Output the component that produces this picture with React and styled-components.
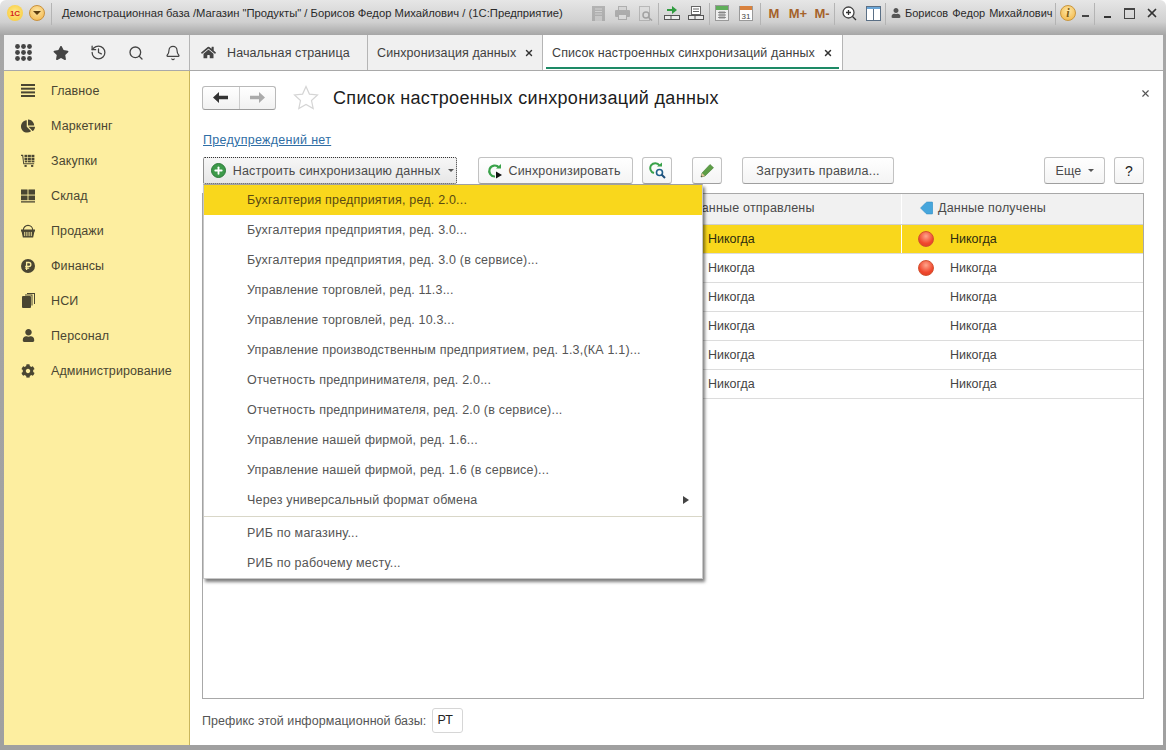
import React from 'react';
import styled, { createGlobalStyle } from 'styled-components';
import { FaHome, FaStar, FaChartPie, FaCog, FaUser } from 'react-icons/fa';
import { History, Search, Bell, X, Plus } from 'lucide-react';

const GlobalStyle = createGlobalStyle`
  html, body { margin: 0; padding: 0; background: #fff; }
  body { font-family: "Liberation Sans", Arial, sans-serif; }
  * { box-sizing: border-box; }
`;

const Window = styled.div`
  width: 1166px;
  height: 750px;
  padding: 0 3px 5px 4px;
  display: flex;
  flex-direction: column;
  background: linear-gradient(#e6e6e6 0, #d0d0d0 22px, #a6a6a6 35px, #a0a0a0 100%);
  border-radius: 6px 6px 0 0;
  overflow: hidden;
`;

const TitleBar = styled.div`
  height: 35px;
  display: flex;
  align-items: flex-start;
  padding: 3px 0 0 3px;
  margin-right: -3px;
  flex-shrink: 0;
`;

const LogoBall = styled.div`
  width: 16px;
  height: 16px;
  margin-top: 2px;
  border-radius: 50%;
  background: radial-gradient(circle at 50% 45%, #ffec8f, #f8c42c);
  color: #d5261c;
  font: bold 8px "Liberation Sans", sans-serif;
  display: flex;
  align-items: center;
  justify-content: center;
  margin-right: 6px;
`;

const MenuBall = styled(LogoBall)`
  background: radial-gradient(circle at 50% 35%, #fde7a6, #f2b245);
  border: 1px solid #c9903a;
  &::after {
    content: '';
    border: 4px solid transparent;
    border-top: 4px solid #5c3d10;
    border-bottom: 0;
  }
`;

const TitleText = styled.div`
  margin-left: 10px;
  font-size: 11.24px;
  line-height: 20px;
  color: #2a2a2a;
  white-space: nowrap;
  width: 524px;
  flex-shrink: 0;
`;

const Sep = styled.div`
  width: 1px;
  height: 22px;
  margin: 0 ${p => p.$r || 0}px 0 ${p => p.$l || 0}px;
  background: #b4b4b4;
  flex-shrink: 0;
`;

const ToolSlot = styled.div`
  width: ${p => p.$w || 24}px;
  height: 20px;
  flex-shrink: 0;
  display: flex;
  align-items: center;
  justify-content: center;
  color: ${p => p.$color || '#a5622a'};
  font-size: 13px;
  font-weight: bold;
  opacity: ${p => (p.$dim ? 0.55 : 1)};
`;

const UserName = styled.div`
  font-size: 11px;
  line-height: 20px;
  word-spacing: 1px;
  color: #2a2a2a;
  white-space: nowrap;
  margin-left: 2px;
  width: 148px;
  flex-shrink: 0;
`;

const InfoBall = styled.div`
  width: 16px;
  height: 16px;
  border-radius: 50%;
  background: radial-gradient(circle at 50% 35%, #fde7a6, #f1b23f);
  border: 1px solid #c9963c;
  color: #7a5a14;
  font: italic bold 12px "Liberation Serif", serif;
  text-align: center;
  line-height: 14px;
`;

const DownMark = styled.div`
  width: 7px;
  height: 2px;
  background: #444;
  margin: 12px 5px 0 2px;
  flex-shrink: 0;
`;

const MinBar = styled.div`
  width: 7px;
  height: 2px;
  background: #333;
  margin-top: 8px;
`;

const MaxBox = styled.div`
  width: 11px;
  height: 11px;
  border: 1px solid #444;
  border-top-width: 2px;
`;

const TabBar = styled.div`
  height: 36px;
  display: flex;
  background: #f0f0f0;
  border-bottom: 1px solid #a9a9a9;
  flex-shrink: 0;
`;

const QuickIcons = styled.div`
  width: 186px;
  display: flex;
  align-items: center;
  gap: 21px;
  padding-left: 11px;
  color: #444;
  border-right: 1px solid #b5b5b5;
  flex-shrink: 0;
`;

const Tab = styled.div`
  height: 100%;
  width: ${p => p.$w}px;
  flex-shrink: 0;
  display: flex;
  align-items: center;
  padding-left: 9px;
  font-size: 12.5px;
  letter-spacing: 0.1px;
  color: #3f3f3f;
  background: ${p => (p.$active ? '#fff' : 'transparent')};
  border-right: 1px solid #b5b5b5;
  position: relative;
  white-space: nowrap;
  ${p => p.$active && `
    &::after {
      content: '';
      position: absolute;
      left: 3px;
      right: 3px;
      bottom: 1px;
      height: 2px;
      background: #1d8a66;
    }
  `}
`;

const HomeMark = styled.span`
  display: flex;
  margin: 0 11px 0 2px;
  color: #444;
`;

const TabClose = styled.span`
  margin-left: 8px;
  display: flex;
  color: #333;
`;

const Body = styled.div`
  flex: 1;
  min-height: 0;
  display: flex;
  background: #fff;
`;

const Sidebar = styled.nav`
  width: 186px;
  flex-shrink: 0;
  background: #fdeea0;
  border-right: 1px solid #c9b65c;
  padding-top: 2px;
`;

const NavItem = styled.div`
  height: 35px;
  display: flex;
  align-items: center;
  padding-left: 17px;
  gap: 16px;
  font-size: 12.5px;
  letter-spacing: 0.1px;
  color: #4a4632;
`;

const NavIcon = styled.span`
  width: 14px;
  height: 16px;
  display: flex;
  align-items: center;
  justify-content: center;
  color: #4a4632;
  flex-shrink: 0;
`;

const Content = styled.main`
  flex: 1;
  min-width: 0;
  padding: 14px 19px 12px 12px;
  display: flex;
  flex-direction: column;
  position: relative;
`;

const FormHead = styled.div`
  display: flex;
  align-items: center;
  height: 25px;
`;

const NavButtons = styled.div`
  width: 74px;
  height: 24px;
  display: flex;
  border: 1px solid #b9b9b9;
  border-bottom-color: #9c9c9c;
  border-radius: 3px;
  background: linear-gradient(#fff, #f1f1f1);
`;

const NavArrow = styled.div`
  flex: 1;
  display: flex;
  align-items: center;
  justify-content: center;
  color: ${p => (p.$off ? '#aaa' : '#333')};
  & + & { border-left: 1px solid #ccc; }
`;

const FavStar = styled.span`
  margin-left: 17px;
  display: flex;
`;

const Title = styled.h1`
  margin: 2px 0 0 14px;
  font-size: 18px;
  letter-spacing: 0.33px;
  font-weight: normal;
  color: #1c1c1c;
  white-space: nowrap;
`;

const FormClose = styled.span`
  position: absolute;
  top: 17px;
  right: 12px;
  display: flex;
  color: #555;
`;

const WarnLink = styled.a`
  display: block;
  margin: 22px 0 0 1px;
  font-size: 12.5px;
  letter-spacing: 0.3px;
  color: #2f6ea5;
  text-decoration: underline;
  line-height: 16px;
`;

const CommandArea = styled.div`
  position: relative;
  margin-top: 9px;
  display: flex;
  align-items: center;
  height: 27px;
`;

const Button = styled.div`
  height: 27px;
  width: ${p => p.$w}px;
  margin-left: ${p => p.$ml || 0}px;
  padding: 0 ${p => p.$pr || 0}px 0 ${p => p.$pl || 0}px;
  flex-shrink: 0;
  display: flex;
  align-items: center;
  justify-content: center;
  gap: 5px;
  border: 1px solid #c2c2c2;
  border-bottom-color: #9f9f9f;
  border-radius: 3px;
  background: linear-gradient(#fff, #f4f4f4);
  font-size: ${p => p.$size || 12.5}px;
  letter-spacing: 0.2px;
  color: ${p => p.$color || '#4a4a4a'};
  white-space: nowrap;
`;

const DefaultButton = styled(Button)`
  border: 1px dotted #333;
  background: linear-gradient(#f6f6f6, #e7e7e7);
  border-radius: 2px;
  margin-left: 1px;
  gap: 7px;
`;

const Caret = styled.span`
  border: 3px solid transparent;
  border-top: 3px solid #555;
  border-bottom: 0;
  margin-left: 1px;
`;

const AddBall = styled.span`
  display: flex;
  width: 15px;
  height: 15px;
  border-radius: 50%;
  background: #3d9a4a;
  border: 1px solid #2b7a38;
  align-items: center;
  justify-content: center;
  color: #fff;
`;

const Grid = styled.div`
  flex: 1;
  min-height: 0;
  margin-top: 9px;
  border: 1px solid #a8a8a8;
`;

const HeaderRow = styled.div`
  height: 31px;
  display: grid;
  grid-template-columns: 480px 218px 1fr;
  background: #f1f1f1;
  border-bottom: 1px solid #d0d0d0;
`;

const HeaderCell = styled.div`
  display: flex;
  align-items: center;
  gap: 5px;
  padding: 0 0 2px ${p => p.$pad || 0}px;
  font-size: 12.5px;
  letter-spacing: 0.2px;
  color: #4a4a4a;
  & + & { border-left: 1px solid #fff; }
`;

const Row = styled.div`
  height: 29px;
  display: grid;
  grid-template-columns: 480px 218px 1fr;
  background: ${p => (p.$sel ? '#f9d71c' : '#fff')};
  border-bottom: 1px solid #dcdcdc;
  font-size: 12.5px;
  color: ${p => (p.$sel ? '#2c2c10' : '#444')};
`;

const Cell = styled.div`
  display: flex;
  align-items: center;
  padding-left: ${p => p.$pad || 0}px;
  border-left: 1px solid ${p => (p.$line ? '#fff' : 'transparent')};
`;

const Lamp = styled.span`
  width: 16px;
  height: 16px;
  border-radius: 50%;
  margin: 0 16px;
  flex-shrink: 0;
  background: radial-gradient(circle at 50% 30%, #ffa58c, #f0482e 60%, #dc3c20);
  border: 1px solid #d2512f;
`;

const LampGap = styled.span`
  width: 48px;
  flex-shrink: 0;
`;

const DropMenu = styled.div`
  position: absolute;
  top: 27px;
  left: 1px;
  width: 500px;
  height: 395px;
  background: #fff;
  border: 1px solid #c8c8c8;
  border-top-color: #a0a0a0;
  box-shadow: 2px 3px 3px rgba(0, 0, 0, 0.5);
  z-index: 5;
`;

const MenuItem = styled.div`
  height: 30px;
  display: flex;
  align-items: center;
  justify-content: space-between;
  padding: 0 13px 0 43px;
  font-size: 12.5px;
  letter-spacing: 0.2px;
  color: ${p => (p.$hot ? '#5a4a10' : '#555')};
  background: ${p => (p.$hot ? '#f9d71c' : 'transparent')};
`;

const SubArrow = styled.span`
  border: 4px solid transparent;
  border-left: 6px solid #444;
  border-right: 0;
`;

const MenuLine = styled.div`
  height: 1px;
  background: #d9d7c8;
  margin: 1px 0;
`;

const Footer = styled.div`
  margin-top: 9px;
  display: flex;
  align-items: center;
  gap: 6px;
  font-size: 12.5px;
  letter-spacing: 0.06px;
  color: #555;
`;

const PrefixBox = styled.div`
  width: 31px;
  height: 25px;
  border: 1px solid #d6d6d6;
  border-radius: 3px;
  padding-left: 4px;
  line-height: 23px;
  color: #222;
`;

const DotGrid = () => (
  <svg width="17" height="17" viewBox="0 0 17 17" fill="#444">
    {[2.5, 8.5, 14.5].flatMap(y => [2.5, 8.5, 14.5].map(x => <circle key={`${x}-${y}`} cx={x} cy={y} r="2.4" />))}
  </svg>
);

const BarsIcon = () => (
  <svg width="14" height="13" viewBox="0 0 14 13" fill="currentColor">
    <rect y="0" width="14" height="2" /><rect y="3.7" width="14" height="2" /><rect y="7.4" width="14" height="2" /><rect y="11" width="14" height="2" />
  </svg>
);

const CartIcon = () => (
  <svg width="16" height="15" viewBox="0 0 16 15" fill="currentColor">
    <path d="M0 1h2.5l1 9.5H15v1.3H2.6L1.4 2.3H0z" />
    <rect x="4" y="1" width="3.3" height="2.7" /><rect x="8" y="1" width="3.3" height="2.7" /><rect x="12" y="1" width="3.3" height="2.7" />
    <rect x="4" y="4.4" width="3.3" height="2.7" /><rect x="8" y="4.4" width="3.3" height="2.7" /><rect x="12" y="4.4" width="3.3" height="2.7" />
    <rect x="4.3" y="7.6" width="3" height="2" /><rect x="8" y="7.6" width="3.3" height="2" /><rect x="12" y="7.6" width="3.3" height="2" />
    <rect x="4" y="12.6" width="2.5" height="2.2" /><rect x="11.5" y="12.6" width="2.5" height="2.2" />
  </svg>
);

const StockIcon = () => (
  <svg width="15" height="14" viewBox="0 0 15 14" fill="currentColor">
    <rect width="7" height="5.5" /><rect x="8" width="7" height="5.5" /><rect y="6.5" width="7" height="5" /><rect x="8" y="6.5" width="7" height="5" /><rect y="12.6" width="15" height="1.4" />
  </svg>
);

const BasketIcon = () => (
  <svg width="15" height="14" viewBox="0 0 15 14">
    <path d="M2.5 6a5 5 0 0 1 10 0" fill="none" stroke="currentColor" strokeWidth="1.2" />
    <path d="M0 5.500h15v2h-.6L13 14H2L.6 7.500H0z" fill="currentColor" />
    <path d="M4 8v4.500M6.300 8v4.500M8.700 8v4.500M11 8v4.500" stroke="#fdeea0" strokeWidth="1" />
  </svg>
);

const RubleIcon = () => (
  <svg width="14" height="14" viewBox="0 0 14 14">
    <circle cx="7" cy="7" r="7" fill="currentColor" />
    <path d="M5.600 11V3.500h2.300a1.900 1.900 0 0 1 0 3.900H4.200M4.200 9.200h4" fill="none" stroke="#fdeea0" strokeWidth="1.3" />
  </svg>
);

const PagesIcon = () => (
  <svg width="13" height="15" viewBox="0 0 13 15" fill="currentColor">
    <rect x="0" y="3" width="9" height="12" rx="1" />
    <path d="M3 1.500h7.500v11h-1v-10H3zM5 0h8v11h-1V1H5z" />
  </svg>
);

const AddIcon = () => (
  <AddBall><Plus size={11} strokeWidth={4} /></AddBall>
);

const BackArrow = () => (
  <svg width="15" height="11" viewBox="0 0 15 11" fill="currentColor"><path d="M0 5.500L6 0v3.800h9v3.400H6V11z" /></svg>
);

const NextArrow = () => (
  <svg width="15" height="11" viewBox="0 0 15 11" fill="currentColor"><path d="M15 5.500L9 0v3.800H0v3.400h9V11z" /></svg>
);

const SyncIcon = () => (
  <svg width="16" height="16" viewBox="0 0 16 16">
    <path d="M12 4.500A5.500 5.500 0 1 0 8 13.500" fill="none" stroke="#3aa24a" strokeWidth="2.2" />
    <path d="M9 5.500h5v-4.500z" fill="#3aa24a" />
    <path d="M9 8.500l6 3.500-6 3.500z" fill="#111" />
  </svg>
);

const SyncFindIcon = () => (
  <svg width="17" height="17" viewBox="0 0 17 17">
    <path d="M10.500 3.500A5 5 0 1 0 5 11" fill="none" stroke="#3aa24a" strokeWidth="2" />
    <path d="M8 4.500h5v-4z" fill="#3aa24a" />
    <circle cx="10.500" cy="10.500" r="3" fill="#fff" stroke="#1f5f8a" strokeWidth="1.600" />
    <path d="M12.500 12.500L16 16" stroke="#1f4f7a" strokeWidth="2" />
  </svg>
);

const PencilIcon = () => (
  <svg width="15" height="15" viewBox="0 0 15 15">
    <path d="M1 14l1-4 8-8.500 3.500 3.200L5 13z" fill="#5d9e45" stroke="#3f7a30" strokeWidth="0.6" />
    <path d="M1 14l1-4 3 3z" fill="#e0c39a" />
    <path d="M1 14l.4-1.600 1.200 1.100z" fill="#333" />
  </svg>
);

const BlueArrow = () => (
  <svg width="13" height="14" viewBox="0 0 13 14">
    <path d="M0.500 7L6 1.500Q6.500 1 7.500 1H12q.8 0 .8.8v10.400q0 .8-.8.8H7.500q-1 0-1.500-.5z" fill="#47a6dc" stroke="#2a86bd" strokeWidth="0.5" />
  </svg>
);

const OutlineStar = () => (
  <svg width="26" height="25" viewBox="0 0 26 25">
    <path d="M13 1.500l3.400 7.600 8.100.9-6 5.500 1.700 8.100-7.200-4.200-7.200 4.200 1.700-8.100-6-5.500 8.100-.9z" fill="#fff" stroke="#d5d5d5" strokeWidth="1.200" />
  </svg>
);

const DocIcon = ({ color = '#666' }) => (
  <svg width="16" height="16" viewBox="0 0 16 16">
    <rect x="3.500" y="1.500" width="9" height="8" fill="#fff" stroke={color} />
    <path d="M5 4h6M5 6.500h6" stroke={color} />
    <rect x="0.500" y="10.500" width="15" height="4" fill="#ececec" stroke="#555" />
    <path d="M7 10.500v4" stroke="#555" />
  </svg>
);

const UploadIcon = () => (
  <svg width="16" height="16" viewBox="0 0 16 16">
    <path d="M3 4h5V1l5 4-5 4V6H3z" fill="#2f9c3f" />
    <rect x="0.500" y="10.500" width="15" height="4" fill="#ececec" stroke="#555" />
    <path d="M7 10.500v4" stroke="#555" />
  </svg>
);

const FloppyIcon = () => (
  <svg width="13" height="15" viewBox="0 0 13 15"><rect width="13" height="15" fill="#8f8f8f" /><path d="M3 3h7M3 5.500h7M3 8h7" stroke="#c9c9c9" /><rect x="3" y="10" width="7" height="5" fill="#bdbdbd" /></svg>
);

const PrintIcon = () => (
  <svg width="15" height="14" viewBox="0 0 15 14"><rect x="3.500" y="0.500" width="8" height="4" fill="#cfcfcf" stroke="#888" /><rect y="4" width="15" height="7" rx="1" fill="#888" /><rect x="3.500" y="8.500" width="8" height="5" fill="#ddd" stroke="#888" /></svg>
);

const PreviewIcon = () => (
  <svg width="14" height="15" viewBox="0 0 14 15"><rect x="0.500" y="0.500" width="10" height="14" fill="#ddd" stroke="#999" /><circle cx="7" cy="9" r="3" fill="none" stroke="#777" strokeWidth="1.500" /><path d="M9 11l4 3.500" stroke="#777" strokeWidth="1.500" /></svg>
);

const CalcIcon = () => (
  <svg width="14" height="16" viewBox="0 0 14 16"><rect x="0.500" y="0.500" width="13" height="15" fill="#eee" stroke="#999" /><rect x="1" y="1" width="12" height="4" fill="#5fae5a" /><path d="M3 7.500h8M3 10h8M3 12.500h8M5 6v8M7 6v8M9 6v8" stroke="#777" strokeWidth="0.8" /></svg>
);

const CalendarIcon = () => (
  <svg width="14" height="16" viewBox="0 0 14 16"><rect x="0.500" y="1.500" width="13" height="14" fill="#fff" stroke="#999" /><rect x="1" y="1" width="12" height="4" fill="#d8813d" /><text x="7" y="13.500" textAnchor="middle" fontSize="8" fontFamily="Liberation Sans" fontWeight="normal" fill="#444">31</text></svg>
);

const ZoomIcon = () => (
  <svg width="15" height="15" viewBox="0 0 15 15"><circle cx="6.500" cy="6.500" r="5.500" fill="#fff" stroke="#444" strokeWidth="1.300" /><path d="M10.500 10.500L14 14M4 6.500h5M6.500 4v5" stroke="#333" strokeWidth="1.300" /></svg>
);

const PanelIcon = () => (
  <svg width="15" height="15" viewBox="0 0 15 15"><rect x="0.500" y="0.500" width="14" height="14" fill="#fff" stroke="#5a6f85" /><rect x="1" y="1" width="13" height="2" fill="#6aa6d8" /><path d="M7.500 3v11" stroke="#5a6f85" /></svg>
);

const sections = [
  ['Главное', <BarsIcon />],
  ['Маркетинг', <FaChartPie size={14} />],
  ['Закупки', <CartIcon />],
  ['Склад', <StockIcon />],
  ['Продажи', <BasketIcon />],
  ['Финансы', <RubleIcon />],
  ['НСИ', <PagesIcon />],
  ['Персонал', <FaUser size={13} />],
  ['Администрирование', <FaCog size={14} />],
];

const menuItems = [
  'Бухгалтерия предприятия, ред. 2.0...',
  'Бухгалтерия предприятия, ред. 3.0...',
  'Бухгалтерия предприятия, ред. 3.0 (в сервисе)...',
  'Управление торговлей, ред. 11.3...',
  'Управление торговлей, ред. 10.3...',
  'Управление производственным предприятием, ред. 1.3,(КА 1.1)...',
  'Отчетность предпринимателя, ред. 2.0...',
  'Отчетность предпринимателя, ред. 2.0 (в сервисе)...',
  'Управление нашей фирмой, ред. 1.6...',
  'Управление нашей фирмой, ред. 1.6 (в сервисе)...',
];

const rows = [
  { lamp: true, sel: true },
  { lamp: true },
  {},
  {},
  {},
  {},
];

export default function App() {
  return (
    <>
      <GlobalStyle />
      <Window>
        <TitleBar>
          <LogoBall>1С</LogoBall>
          <MenuBall />
          <Sep />
          <TitleText>Демонстрационная база /Магазин "Продукты" / Борисов Федор Михайлович /  (1С:Предприятие)</TitleText>
          <ToolSlot $dim><FloppyIcon /></ToolSlot>
          <ToolSlot $dim><PrintIcon /></ToolSlot>
          <ToolSlot $dim><PreviewIcon /></ToolSlot>
          <Sep $r={1} />
          <ToolSlot><UploadIcon /></ToolSlot>
          <ToolSlot><DocIcon /></ToolSlot>
          <Sep $l={1} />
          <ToolSlot><CalcIcon /></ToolSlot>
          <ToolSlot><CalendarIcon /></ToolSlot>
          <Sep $l={2} $r={1} />
          <ToolSlot>M</ToolSlot>
          <ToolSlot>M+</ToolSlot>
          <ToolSlot>M-</ToolSlot>
          <Sep $r={2} />
          <ToolSlot><ZoomIcon /></ToolSlot>
          <ToolSlot><PanelIcon /></ToolSlot>
          <Sep $r={3} />
          <ToolSlot $w={14} $color="#555"><FaUser size={10} /></ToolSlot>
          <UserName>Борисов Федор Михайлович</UserName>
          <Sep $l={2} />
          <ToolSlot><InfoBall>i</InfoBall></ToolSlot>
          <DownMark />
          <Sep />
          <ToolSlot><MinBar /></ToolSlot>
          <ToolSlot $w={20}><MaxBox /></ToolSlot>
          <ToolSlot $w={25} $color="#333"><X size={14} strokeWidth={3} /></ToolSlot>
        </TitleBar>
        <TabBar>
          <QuickIcons>
            <DotGrid />
            <FaStar size={16} />
            <History size={17} strokeWidth={1.8} />
            <Search size={16} strokeWidth={2} />
            <Bell size={16} strokeWidth={1.8} />
          </QuickIcons>
          <Tab $w={178}><HomeMark><FaHome size={15} /></HomeMark>Начальная страница</Tab>
          <Tab $w={175}>Синхронизация данных<TabClose><X size={10} strokeWidth={3.5} /></TabClose></Tab>
          <Tab $w={300} $active>Список настроенных синхронизаций данных<TabClose><X size={10} strokeWidth={3.5} /></TabClose></Tab>
        </TabBar>
        <Body>
          <Sidebar>
            {sections.map(([label, icon]) => (
              <NavItem key={label}><NavIcon>{icon}</NavIcon>{label}</NavItem>
            ))}
          </Sidebar>
          <Content>
            <FormHead>
              <NavButtons>
                <NavArrow><BackArrow /></NavArrow>
                <NavArrow $off><NextArrow /></NavArrow>
              </NavButtons>
              <FavStar><OutlineStar /></FavStar>
              <Title>Список настроенных синхронизаций данных</Title>
              <FormClose><X size={11} strokeWidth={2.5} /></FormClose>
            </FormHead>
            <WarnLink>Предупреждений нет</WarnLink>
            <CommandArea>
              <DefaultButton $w={254} $pl={5}><AddIcon />Настроить синхронизацию данных<Caret /></DefaultButton>
              <Button $w={155} $ml={21} $pr={3}><SyncIcon />Синхронизировать</Button>
              <Button $w={30} $ml={9}><SyncFindIcon /></Button>
              <Button $w={30} $ml={20}><PencilIcon /></Button>
              <Button $w={152} $ml={20}>Загрузить правила...</Button>
              <Button $w={61} $ml={150}>Еще<Caret /></Button>
              <Button $w={30} $ml={9} $color="#222" $size={14}>?</Button>
              <DropMenu>
                {menuItems.map((item, i) => (
                  <MenuItem key={item} $hot={i === 0}>{item}</MenuItem>
                ))}
                <MenuItem>Через универсальный формат обмена<SubArrow /></MenuItem>
                <MenuLine />
                <MenuItem>РИБ по магазину...</MenuItem>
                <MenuItem>РИБ по рабочему месту...</MenuItem>
              </DropMenu>
            </CommandArea>
            <Grid>
              <HeaderRow>
                <HeaderCell />
                <HeaderCell $pad={9}>Данные отправлены</HeaderCell>
                <HeaderCell $pad={18}><BlueArrow />Данные получены</HeaderCell>
              </HeaderRow>
              {rows.map((row, i) => (
                <Row key={i} $sel={row.sel}>
                  <Cell />
                  <Cell $pad={24}>Никогда</Cell>
                  <Cell $line={row.sel}>
                    {row.lamp ? <Lamp /> : <LampGap />}
                    Никогда
                  </Cell>
                </Row>
              ))}
            </Grid>
            <Footer>
              Префикс этой информационной базы:
              <PrefixBox>РТ</PrefixBox>
            </Footer>
          </Content>
        </Body>
      </Window>
    </>
  );
}
